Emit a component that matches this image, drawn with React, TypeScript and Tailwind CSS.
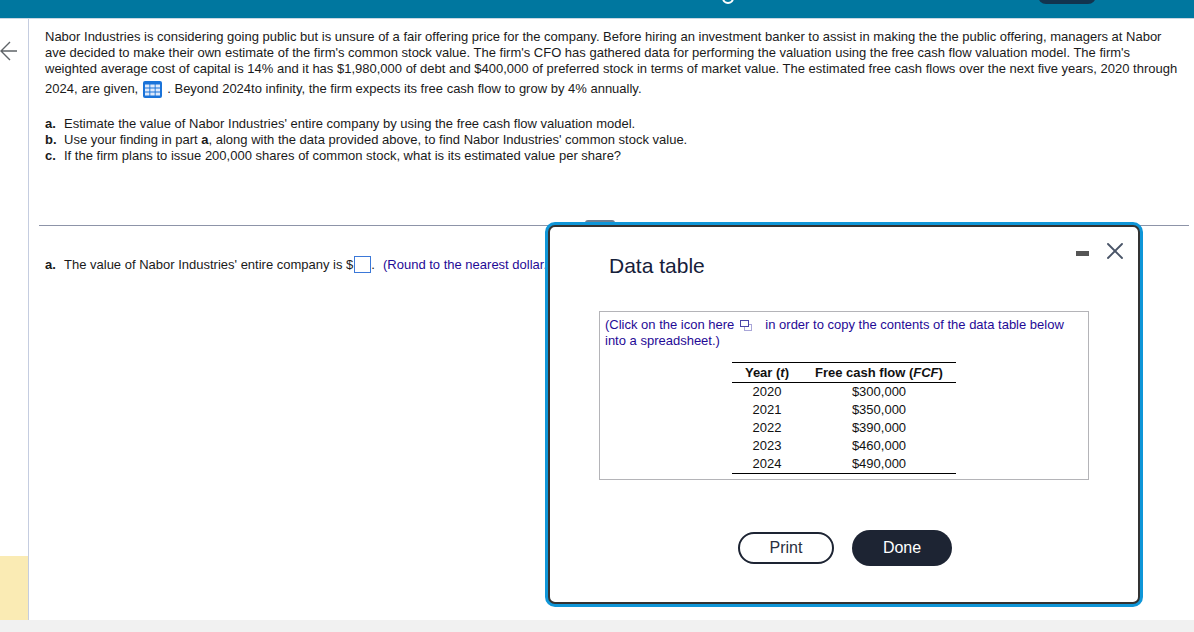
import { X } from 'lucide-react';

const rows = [
  ['2020', '$300,000'],
  ['2021', '$350,000'],
  ['2022', '$390,000'],
  ['2023', '$460,000'],
  ['2024', '$490,000'],
];

function GridIcon() {
  return (
    <svg width="19" height="17" viewBox="0 0 19 17" className="ml-[5px] mr-[5px] inline-block">
      <rect width="19" height="17" rx="2" fill="#1a73d9" />
      <g fill="#dfeafb">
        <rect x="2" y="3.5" width="4.4" height="3" />
        <rect x="7.3" y="3.5" width="4.4" height="3" />
        <rect x="12.6" y="3.5" width="4.4" height="3" />
        <rect x="2" y="7.5" width="4.4" height="3" />
        <rect x="7.3" y="7.5" width="4.4" height="3" />
        <rect x="12.6" y="7.5" width="4.4" height="3" />
        <rect x="2" y="11.5" width="4.4" height="3" />
        <rect x="7.3" y="11.5" width="4.4" height="3" />
        <rect x="12.6" y="11.5" width="4.4" height="3" />
      </g>
    </svg>
  );
}

function CopyIcon() {
  return (
    <svg width="12" height="11" viewBox="0 0 12 11" className="ml-[6px] inline-block">
      <rect x="4.5" y="4.5" width="7" height="6" fill="none" stroke="#a9a6d8" />
      <rect x="0.5" y="0.5" width="8" height="6" fill="#fff" stroke="#4a46a8" />
    </svg>
  );
}

function DataTableModal() {
  return (
    <div className="absolute left-[545px] top-[222px] h-[385px] w-[598px] rounded-[10px] border-[3px] border-[#0f96d8] bg-[#0f96d8]">
      <div className="relative h-full w-full rounded-[7px] border-2 border-[#333] bg-white pl-[59px] pt-[25px]">
        <div className="absolute left-[526px] top-[24px] h-[5px] w-[13px] bg-[#555]" />
        <X className="absolute left-[551px] top-[10px] h-[28px] w-[28px] text-[#4a5568]" strokeWidth={1.6} />
        <h2 className="text-[21px] leading-[28px] text-[#16203a]">Data table</h2>
        <div className="ml-[-10px] mt-[31px] h-[169px] w-[490px] border border-[#b4b4b8] pl-[5px] pt-[5px]">
          <p className="text-[13px] leading-[16px] text-[#1f0a96]">
            (Click on the icon here
            <CopyIcon />
            <span className="ml-[13px]">in order to copy the contents of the data table below</span>
            <br />
            into a spreadsheet.)
          </p>
          <table className="ml-[127px] mt-[13px] w-[224px] border-y border-black text-[13px] leading-[18px] text-[#111]">
            <thead>
              <tr className="border-b border-black">
                <th className="h-[20px] w-[70px] text-center font-bold">
                  Year (<i>t</i>)
                </th>
                <th className="text-left font-bold">
                  <span className="ml-[13px]">
                    Free cash flow (<i>FCF</i>)
                  </span>
                </th>
              </tr>
            </thead>
            <tbody>
              {rows.map(([year, value]) => (
                <tr key={year}>
                  <td className="text-center">{year}</td>
                  <td className="text-center">{value}</td>
                </tr>
              ))}
            </tbody>
          </table>
        </div>
        <div className="ml-[129px] mt-[50px] flex items-center gap-[18px]">
          <button className="h-[32px] w-[96px] rounded-full border-2 border-[#1d2433] bg-white text-[16px] text-[#2a3040]">
            Print
          </button>
          <button className="h-[36px] w-[100px] rounded-full bg-[#1d2433] text-[16px] text-white">Done</button>
        </div>
      </div>
    </div>
  );
}

export default function App() {
  return (
    <div className="relative flex h-[632px] w-[1194px] flex-col overflow-hidden bg-white font-['Liberation_Sans',Arial,sans-serif]">
      {/* top bar, cut off by the frame */}
      <div className="relative h-[19px] shrink-0 border-b border-[#c9d6e2] bg-[#00779f]">
        <div className="absolute left-[722px] top-[-8px] h-[12px] w-[12px] rounded-full border-2 border-white" />
        <div className="absolute left-[1038px] top-[-4px] h-[8px] w-[58px] rounded-b-[8px] bg-[#12344f]" />
      </div>

      <div className="flex min-h-0 flex-1">
        <div className="flex w-[29px] shrink-0 flex-col border-r border-[#c5cde0]">
          <svg width="18" height="20" viewBox="0 0 18 20" className="mt-[22px]" fill="none" stroke="#5f6468" strokeWidth="1.4">
            <path d="M17 10H1M10 1 1 10l9 9" />
          </svg>
          <div className="mt-[495px] flex-1 bg-[#faebb4]" />
        </div>

        <main className="min-w-0 flex-1 pl-[16px] pt-[10px] text-[13px] leading-[16px] text-[#1a1a1a]">
          <div className="whitespace-nowrap">
            <p>
              Nabor Industries is considering going public but is unsure of a fair offering price for the company. Before hiring an investment banker to assist in making the the public offering, managers at Nabor
            </p>
            <p>
              ave decided to make their own estimate of the firm's common stock value. The firm's CFO has gathered data for performing the valuation using the free cash flow valuation model. The firm's
            </p>
            <p>
              weighted average cost of capital is 14% and it has $1,980,000 of debt and $400,000 of preferred stock in terms of market value. The estimated free cash flows over the next five years, 2020 through
            </p>
            <p className="mt-[2px] flex h-[20px] items-center">
              2024, are given,
              <GridIcon />. Beyond 2024to infinity, the firm expects its free cash flow to grow by 4% annually.
            </p>
          </div>

          <ol className="mt-[17px] whitespace-nowrap">
            <li>
              <b className="inline-block w-[19px]">a.</b>Estimate the value of Nabor Industries' entire company by using the free cash flow valuation model.
            </li>
            <li>
              <b className="inline-block w-[19px]">b.</b>Use your finding in part <b>a</b>, along with the data provided above, to find Nabor Industries' common stock value.
            </li>
            <li>
              <b className="inline-block w-[19px]">c.</b>If the firm plans to issue 200,000 shares of common stock, what is its estimated value per share?
            </li>
          </ol>

          <hr className="ml-[-6px] mr-[5px] mt-[61px] border-t border-[#8d94a8]" />

          <p className="mt-[30px] flex items-center whitespace-nowrap">
            <b className="w-[19px]">a.</b>
            <span>The value of Nabor Industries' entire company is $</span>
            <span className="ml-[1px] h-[17px] w-[17px] border border-[#3b78d8]" />
            <span>.</span>
            <span className="ml-[8px] text-[#1f0a96]">(Round to the nearest dollar.)</span>
          </p>
        </main>
      </div>

      <div className="h-[12px] shrink-0 bg-[#f1f1f1]" />

      <div className="absolute left-[585px] top-[220px] h-[4px] w-[30px] rounded-t-[3px] bg-[#6f7f92]" />
      <DataTableModal />
    </div>
  );
}
